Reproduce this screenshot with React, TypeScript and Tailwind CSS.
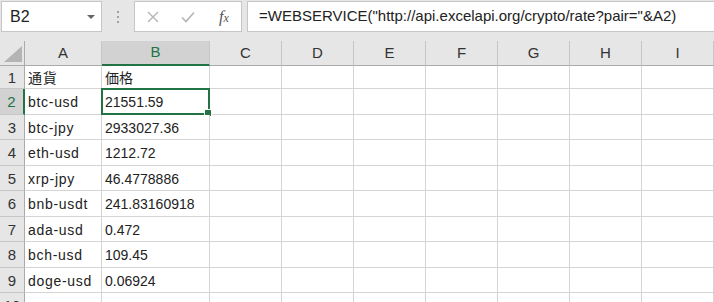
import React from "react";

const cols = ["A", "B", "C", "D", "E", "F", "G", "H", "I"];
const rows: { a: string; b: string; h: string }[] = [
  { a: "通貨", b: "価格", h: "h-[23px]" },
  { a: "btc-usd", b: "21551.59", h: "h-[26px]" },
  { a: "btc-jpy", b: "2933027.36", h: "h-[25px]" },
  { a: "eth-usd", b: "1212.72", h: "h-[26px]" },
  { a: "xrp-jpy", b: "46.4778886", h: "h-[25px]" },
  { a: "bnb-usdt", b: "241.83160918", h: "h-[26px]" },
  { a: "ada-usd", b: "0.472", h: "h-[25px]" },
  { a: "bch-usd", b: "109.45", h: "h-[26px]" },
  { a: "doge-usd", b: "0.06924", h: "h-[25px]" },
  { a: "", b: "", h: "h-[26px]" },
];

const font = { fontFamily: '"Liberation Sans", "Noto Sans CJK JP", sans-serif' };

export default function App() {
  return (
    <div className="w-[714px] h-[302px] overflow-hidden bg-[#e6e6e6] text-[#222]" style={font}>
      {/* formula bar */}
      <div className="flex h-[32px] pt-[1px]">
        <div className="ml-[1px] w-[101px] h-[31px] bg-white border border-[#c6c6c6] flex items-center justify-between pl-[8px] pr-[6px]">
          <span className="text-[16px] text-[#222]">B2</span>
          <svg width="8" height="4" viewBox="0 0 8 4">
            <path d="M0 0 H8 L4 4 Z" fill="#666" />
          </svg>
        </div>
        <div className="w-[32px] flex flex-col items-center justify-center gap-[3px]">
          <div className="w-[2px] h-[2px] bg-[#a0a0a0]" />
          <div className="w-[2px] h-[2px] bg-[#a0a0a0]" />
          <div className="w-[2px] h-[2px] bg-[#a0a0a0]" />
        </div>
        <div className="w-[108px] h-[31px] bg-white border border-[#c6c6c6] flex items-center pl-[12px]">
          <svg width="12" height="12" viewBox="0 0 12 12">
            <path d="M1 1 L11 11 M11 1 L1 11" stroke="#b5b5b5" strokeWidth="1.4" fill="none" />
          </svg>
          <svg width="14" height="12" viewBox="0 0 14 12" className="ml-[22px]">
            <path d="M1 6.5 L5 10.5 L13 1.5" stroke="#b5b5b5" strokeWidth="1.6" fill="none" />
          </svg>
          <span
            className="ml-[24px] italic text-[#555] text-[16px] leading-none"
            style={{ fontFamily: '"Liberation Serif", serif' }}
          >
            f<span className="text-[12px]">x</span>
          </span>
        </div>
        <div className="ml-[5px] flex-1 h-[31px] bg-white border border-[#c6c6c6] border-r-0 flex items-center pl-[11px]">
          <span className="text-[15px] text-[#222] whitespace-nowrap">
            =WEBSERVICE("http://api.excelapi.org/crypto/rate?pair="&amp;A2)
          </span>
        </div>
      </div>
      <div className="h-[9px]" />
      {/* grid */}
      <div className="grid grid-cols-[25px_77px_108px_72px_72px_72px_72px_72px_72px_72px]">
        <div className="h-[25px] bg-[#e6e6e6] border-r border-b border-[#ababab] relative">
          <svg width="18" height="16" viewBox="0 0 18 16" className="absolute left-[4px] bottom-[3px]">
            <path d="M0 16 L18 16 L18 0 Z" fill="#b4b4b4" />
          </svg>
        </div>
        {cols.map((c) => {
          const sel = c === "B";
          return (
            <div
              key={c}
              className={
                sel
                  ? "h-[25px] bg-[#d2d2d2] border-r border-r-[#c6c6c6] border-b-2 border-b-[#217346] flex items-center justify-center text-[15px] text-[#217346]"
                  : "h-[25px] bg-[#e6e6e6] border-r border-r-[#c6c6c6] border-b border-b-[#ababab] flex items-center justify-center text-[15px] text-[#333]"
              }
            >
              {c}
            </div>
          );
        })}
        {rows.map((r, i) => {
          const n = i + 1;
          const sel = n === 2;
          return (
            <React.Fragment key={n}>
              <div
                className={
                  sel
                    ? `${r.h} bg-[#d2d2d2] border-b border-b-[#c6c6c6] border-r-2 border-r-[#217346] flex items-center justify-center text-[15px] text-[#217346]`
                    : `${r.h} bg-[#e6e6e6] border-b border-b-[#c6c6c6] border-r border-r-[#ababab] flex items-center justify-center text-[15px] text-[#333]`
                }
              >
                <span className="pt-[2px]">{n}</span>
              </div>
              <div className={`${r.h} bg-white border-r border-b border-[#d4d4d4] flex items-center pl-[3px] pt-[2px] text-[14px] tracking-[0.7px] whitespace-nowrap`}>
                {r.a}
              </div>
              <div className={`${r.h} bg-white border-r border-b border-[#d4d4d4] flex items-center pl-[3px] pt-[2px] text-[14px] whitespace-nowrap relative`}>
                {r.b}
                {sel && (
                  <>
                    <div className="absolute left-[-1px] top-[-1px] right-[-1px] bottom-[-1px] border-2 border-[#217346]" />
                    <div className="absolute right-[-3px] bottom-[-3px] w-[6px] h-[6px] bg-[#217346] border border-white box-content" />
                  </>
                )}
              </div>
              {cols.slice(2).map((c) => (
                <div key={c} className={`${r.h} bg-white border-r border-b border-[#d4d4d4]`} />
              ))}
            </React.Fragment>
          );
        })}
      </div>
    </div>
  );
}
